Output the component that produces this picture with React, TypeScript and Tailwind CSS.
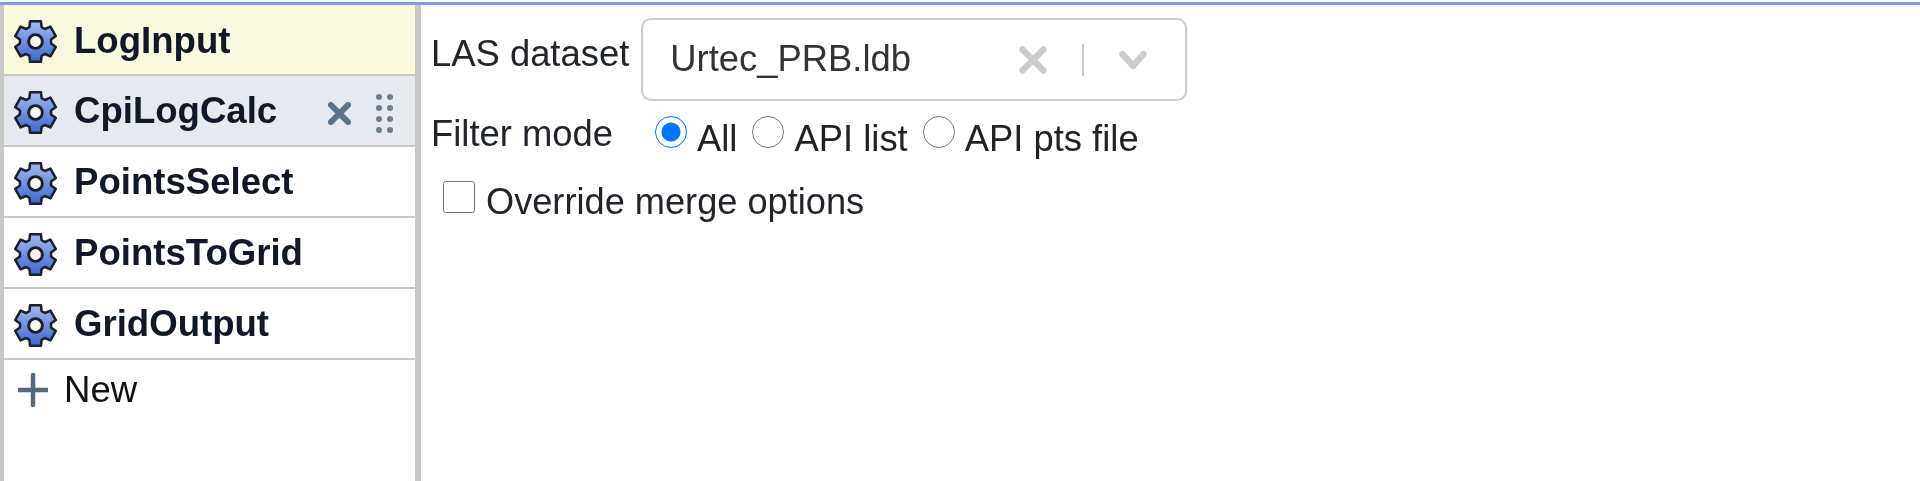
const steps = ["LogInput", "CpiLogCalc", "PointsSelect", "PointsToGrid", "GridOutput"]

// six-toothed cog outline, built once from polar points
function cogPath() {
  const cx = 24
  const cy = 24
  const outer = 21.5
  const inner = 16
  const pts: string[] = []
  for (let i = 0; i < 6; i++) {
    const a = (i * Math.PI) / 3 - Math.PI / 2
    const offs: [number, number][] = [
      [-0.4, inner],
      [-0.26, outer],
      [0.26, outer],
      [0.4, inner],
    ]
    offs.forEach(([o, r]) => {
      const x = cx + r * Math.cos(a + o)
      const y = cy + r * Math.sin(a + o)
      pts.push(`${x.toFixed(2)} ${y.toFixed(2)}`)
    })
  }
  return "M" + pts.join("L") + "Z"
}

function Cog({ id }: { id: string }) {
  return (
    <svg viewBox="0 0 48 48" className="w-[47px] h-[47px] shrink-0 mt-[3px]">
      <defs>
        <linearGradient id={id} x1="0" y1="0" x2="0" y2="1">
          <stop offset="0" stopColor="#a3b8ec" />
          <stop offset="1" stopColor="#3f68cf" />
        </linearGradient>
      </defs>
      <path d={cogPath()} fill={`url(#${id})`} stroke="#1a202c" strokeWidth="2.6" strokeLinejoin="round" />
      <circle cx="24" cy="24" r="7" fill="#f7f7f2" stroke="#1a202c" strokeWidth="3" />
    </svg>
  )
}

function StepRow({ name, index }: { name: string; index: number }) {
  const bg = index === 0 ? "bg-[#f9f9e0]" : index === 1 ? "bg-[#e6eaef]" : "bg-white"
  return (
    <div className={`h-[71px] flex items-center pl-[8px] pr-[22px] border-b-[2px] border-[#c8c8c8] ${bg}`}>
      <Cog id={`cog-${index}`} />
      <span className={`ml-[15px] font-bold text-[#111827] text-[36.6px] leading-none ${index === 0 ? "mt-[3px]" : "mt-[1px]"}`}>{name}</span>
      {index === 1 && (
        <div className="ml-auto flex items-center gap-[25px] mt-[5px]">
          <svg viewBox="0 0 24 24" className="w-[23px] h-[23px]">
            <path d="M3 3 21 21M21 3 3 21" stroke="#5f7486" strokeWidth="6" strokeLinecap="round" />
          </svg>
          <div className="grid grid-cols-2 gap-x-[5px] gap-y-[5px]">
            {Array.from({ length: 8 }).map((_, i) => (
              <span key={i} className="w-[6px] h-[6px] rounded-full bg-[#6b7f90]" />
            ))}
          </div>
        </div>
      )}
    </div>
  )
}

export default function App() {
  return (
    <div className="h-screen bg-white pt-[2px] font-['Liberation_Sans',Arial,sans-serif] text-[#212529] overflow-hidden blur-[0.5px]">
      <div className="h-full border-t-[3px] border-[#7b9fe3] flex">
        {/* Sidebar */}
        <aside className="w-[421px] shrink-0 border-l-[4px] border-r-[6px] border-[#c8c8c8] bg-white">
          {steps.map((s, i) => (
            <StepRow key={s} name={s} index={i} />
          ))}
          <div className="flex items-center pl-[14px] pt-[8px]">
            <svg viewBox="0 0 30 34" className="w-[30px] h-[34px]">
              <path d="M15 2V32M0 17H30" stroke="#56697c" strokeWidth="4.5" strokeLinecap="round" />
            </svg>
            <span className="ml-[16px] text-[36.6px] leading-[44px] text-[#111]">New</span>
          </div>
        </aside>

        {/* Settings panel */}
        <main className="flex-1 pl-[10px] pt-[13px] text-[36.4px] leading-none">
          <div className="flex items-start">
            <label className="mt-[18px]">LAS dataset</label>
            <div className="ml-[12px] w-[546px] h-[83px] border-[2px] border-[#cccccc] rounded-[10px] flex items-center pl-[27px] pr-[35px]">
              <span className="text-[#333333] flex-1">Urtec_PRB.ldb</span>
              <svg viewBox="0 0 24 24" className="w-[28px] h-[28px]">
                <path d="M3 3 21 21M21 3 3 21" stroke="#cccccc" strokeWidth="5.5" strokeLinecap="round" />
              </svg>
              <span className="w-[2px] h-[32px] bg-[#cccccc] ml-[35px] mr-[32px]" />
              <svg viewBox="0 0 24 24" className="w-[34px] h-[28px]">
                <path d="M3 7 12 17 21 7" fill="none" stroke="#cccccc" strokeWidth="5.5" strokeLinecap="round" strokeLinejoin="round" />
              </svg>
            </div>
          </div>

          <div className="flex items-start mt-[15px]">
            <label className="w-[224px] shrink-0">Filter mode</label>
            <div className="flex items-start">
              {["All", "API list", "API pts file"].map((opt, i) => (
                <label key={opt} className="flex items-start mr-[15px]">
                  <input type="radio" name="filter" defaultChecked={i === 0} className="w-[32px] h-[32px] m-0 shrink-0" />
                  <span className="ml-[10px] mt-[5px] text-[#222]">{opt}</span>
                </label>
              ))}
            </div>
          </div>

          <label className="flex items-start ml-[12px] mt-[24px]">
            <input type="checkbox" className="w-[32px] h-[32px] m-0 shrink-0" />
            <span className="ml-[11px] mt-[3px] text-[36.2px]">Override merge options</span>
          </label>
        </main>
      </div>
    </div>
  )
}
